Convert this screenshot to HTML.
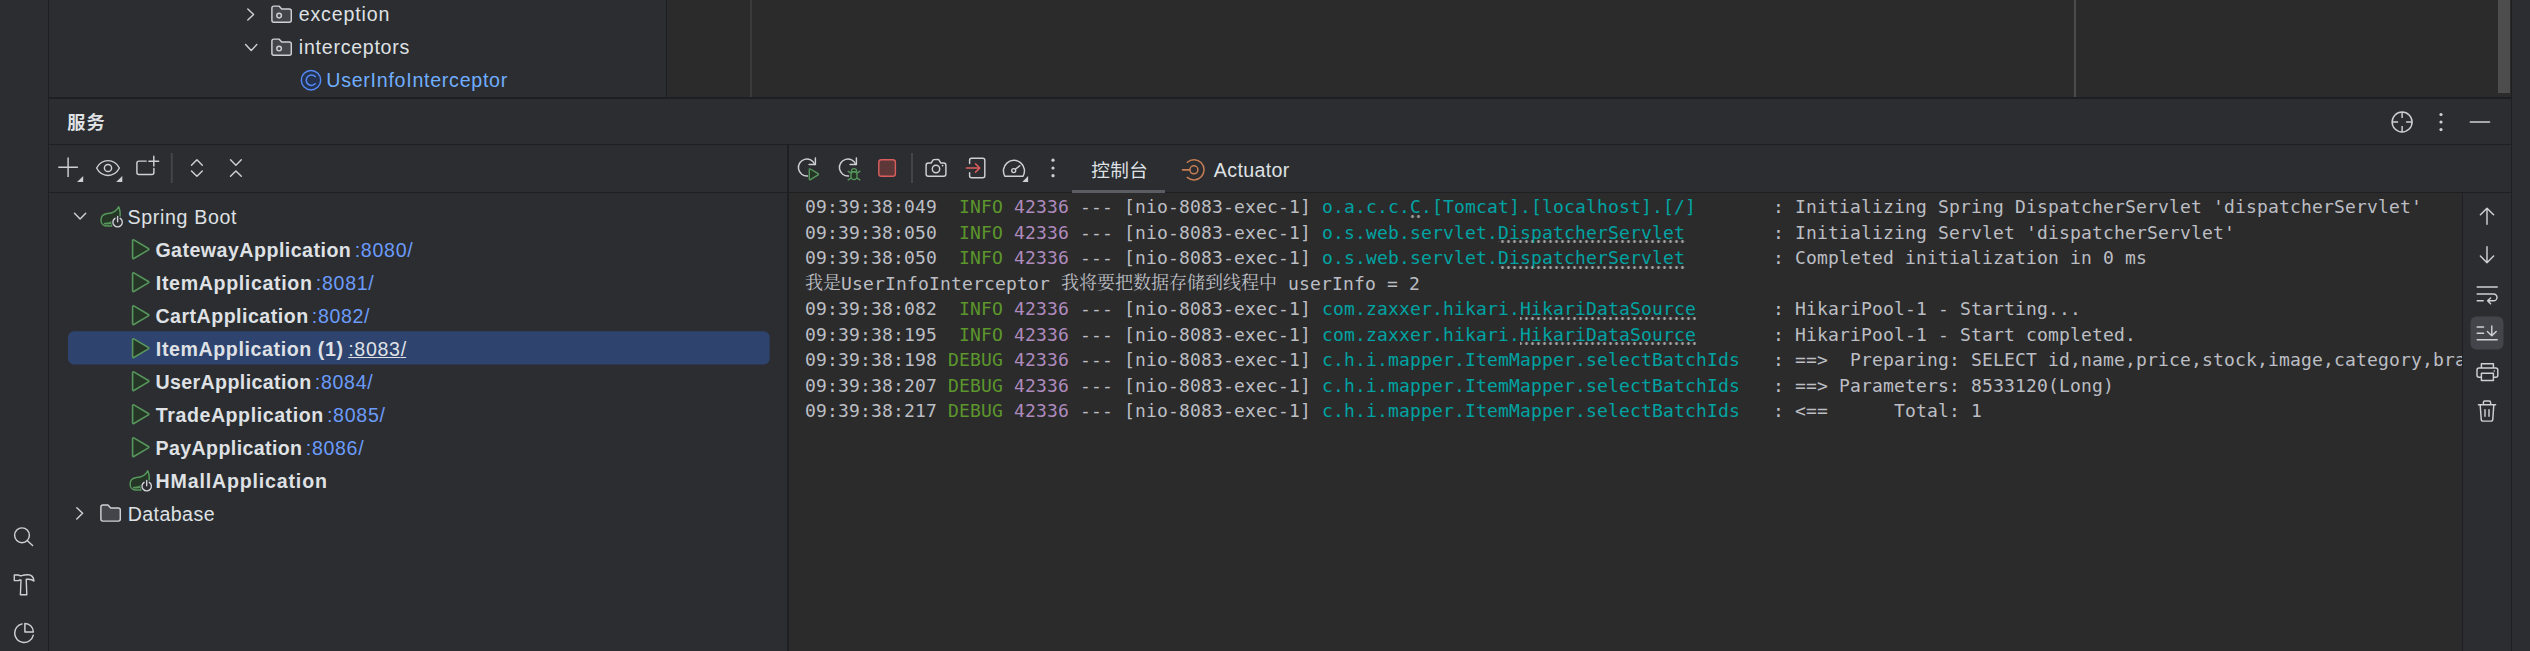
<!DOCTYPE html>
<html lang="zh">
<head>
<meta charset="utf-8">
<title>Services</title>
<style>
*{box-sizing:border-box;margin:0;padding:0}
html,body{width:2530px;height:651px;overflow:hidden;background:#2b2d30}
body{position:relative;font-family:"Liberation Sans","Noto Sans CJK SC",sans-serif;color:#dfe1e5;font-size:18px}
.abs{position:absolute}
.ln{position:absolute;background:#1e1f22}
.t{position:absolute;white-space:pre;line-height:33px;height:33px;font-size:18.6px;color:#dfe1e5}
.b{font-weight:bold}
.port{color:#6b9bfa;font-weight:normal}
svg{position:absolute;overflow:visible}
.con{position:absolute;left:805px;white-space:pre;font-family:"DejaVu Sans Mono","Liberation Mono","Noto Serif CJK SC",monospace;font-size:18px;letter-spacing:0.163px;line-height:26px;height:26px;color:#bcbec4}
.cj{font-family:"Noto Serif CJK SC","Liberation Mono",serif;font-size:18px;letter-spacing:0;line-height:0;position:relative;top:-1px}
.g{color:#5c962c}.m{color:#ae8abe}.c{color:#00a3a3}
.u{background-image:radial-gradient(circle at 3px 1.5px,#a0a0a0 1.15px,rgba(160,160,160,0) 1.75px);background-size:6px 3px;background-repeat:repeat-x;background-position:0 100%;padding-bottom:0.5px}
.u1{background-position-x:-0.5px}.u2{background-position-x:1.5px}.u3{background-position-x:3.5px}
</style>
</head>
<body>
<!-- editor area -->
<div class="abs" style="left:667px;top:0;width:1844px;height:97px;background:#2b2b2b"></div>
<div class="abs" style="left:750px;top:0;width:2px;height:97px;background:#3b3b3b"></div>
<div class="abs" style="left:2074px;top:0;width:2px;height:97px;background:#4b4b4b"></div>
<div class="abs" style="left:2498px;top:0;width:12px;height:93px;background:#4d4d4d"></div>
<!-- console bg -->
<div class="abs" style="left:789px;top:193px;width:1673px;height:458px;background:#2b2b2b"></div>
<!-- structural lines -->
<div class="ln" style="left:48px;top:0;width:1px;height:651px"></div>
<div class="ln" style="left:666px;top:0;width:1px;height:97px"></div>
<div class="ln" style="left:2511px;top:0;width:1px;height:651px"></div>
<div class="ln" style="left:49px;top:97px;width:2462px;height:2px"></div>
<div class="ln" style="left:49px;top:144px;width:2462px;height:1px"></div>
<div class="ln" style="left:49px;top:192px;width:2462px;height:1px"></div>
<div class="ln" style="left:787px;top:145px;width:2px;height:506px"></div>
<div class="ln" style="left:2462px;top:193px;width:1px;height:458px"></div>

<svg width="720" height="40" viewBox="60 328 720 40" style="left:60px;top:328px"><rect x="68" y="331.3" width="701.7" height="33.1" rx="6" fill="#2e436e"/></svg>
<div class="abs" style="left:1072px;top:190px;width:93px;height:3px;background:#5a5d63"></div>
<!--TEXT-START-->
<div class="t" id="p1" style="left:298.76px;top:-2px;font-size:19.6px;letter-spacing:0.837px">exception</div>
<div class="t" id="p2" style="left:298.86px;top:31px;font-size:19.6px;letter-spacing:0.733px">interceptors</div>
<div class="t" id="p3" style="left:326.24px;top:64px;font-size:19.6px;letter-spacing:0.741px;color:#70aeff">UserInfoInterceptor</div>
<div class="t b" id="h1" style="left:67.35px;top:107px;font-size:18.2px;letter-spacing:1.062px">服务</div>
<div class="t" id="s0" style="left:127.48px;top:201px;font-size:19.6px;letter-spacing:0.657px">Spring Boot</div>
<div class="t b" id="s1" style="left:155.38px;top:234px;font-size:19.6px;letter-spacing:0.482px">GatewayApplication</div>
<div class="t" id="s1p" style="left:354.69px;top:234px;font-size:19.6px;letter-spacing:0.721px;color:#6b9bfa">:8080/</div>
<div class="t b" id="s2" style="left:155.85px;top:267px;font-size:19.6px;letter-spacing:0.646px">ItemApplication</div>
<div class="t" id="s2p" style="left:315.86px;top:267px;font-size:19.6px;letter-spacing:0.689px;color:#6b9bfa">:8081/</div>
<div class="t b" id="s3" style="left:155.38px;top:300px;font-size:19.6px;letter-spacing:0.491px">CartApplication</div>
<div class="t" id="s3p" style="left:311.86px;top:300px;font-size:19.6px;letter-spacing:0.629px;color:#6b9bfa">:8082/</div>
<div class="t b" id="s4" style="left:155.85px;top:333px;font-size:19.6px;letter-spacing:0.600px">ItemApplication (1)</div>
<div class="t" id="s4p" style="left:348.19px;top:333px;font-size:19.6px;letter-spacing:0.698px;text-decoration:underline;text-decoration-thickness:1.2px;text-underline-offset:1px">:8083<span style="letter-spacing:0">/</span></div>
<div class="t b" id="s5" style="left:155.45px;top:366px;font-size:19.6px;letter-spacing:0.393px">UserApplication</div>
<div class="t" id="s5p" style="left:314.79px;top:366px;font-size:19.6px;letter-spacing:0.678px;color:#6b9bfa">:8084/</div>
<div class="t b" id="s6" style="left:155.80px;top:399px;font-size:19.6px;letter-spacing:0.562px">TradeApplication</div>
<div class="t" id="s6p" style="left:326.91px;top:399px;font-size:19.6px;letter-spacing:0.729px;color:#6b9bfa">:8085/</div>
<div class="t b" id="s7" style="left:155.56px;top:432px;font-size:19.6px;letter-spacing:0.385px">PayApplication</div>
<div class="t" id="s7p" style="left:305.87px;top:432px;font-size:19.6px;letter-spacing:0.656px;color:#6b9bfa">:8086/</div>
<div class="t b" id="s8" style="left:155.57px;top:465px;font-size:19.6px;letter-spacing:0.827px">HMallApplication</div>
<div class="t" id="s9" style="left:127.63px;top:498px;font-size:19.6px;letter-spacing:0.432px">Database</div>
<div class="t" id="t1" style="left:1091.22px;top:154px;font-size:18.6px;letter-spacing:0.403px">控制台</div>
<div class="t" id="t2" style="left:1213.85px;top:154px;font-size:19.6px;letter-spacing:0.339px">Actuator</div>
<!--TEXT-END-->

<!-- console -->
<div id="console">
<div class="con" style="top:194px">09:39:38:049  <span class="g">INFO</span> <span class="m">42336</span> --- [nio-8083-exec-1] <span class="c">o.a.c.c.<span class="u u1">C</span>.[Tomcat].[localhost].[/]</span>       : Initializing Spring DispatcherServlet 'dispatcherServlet'</div>
<div class="con" style="top:219.5px">09:39:38:050  <span class="g">INFO</span> <span class="m">42336</span> --- [nio-8083-exec-1] <span class="c">o.s.web.servlet.<span class="u u2">DispatcherServlet</span></span>        : Initializing Servlet 'dispatcherServlet'</div>
<div class="con" style="top:245px">09:39:38:050  <span class="g">INFO</span> <span class="m">42336</span> --- [nio-8083-exec-1] <span class="c">o.s.web.servlet.<span class="u u2">DispatcherServlet</span></span>        : Completed initialization in 0 ms</div>
<div class="con" style="top:270.5px"><span class="cj">我是</span>UserInfoInterceptor <span class="cj">我将要把数据存储到线程中</span> userInfo = 2</div>
<div class="con" style="top:296px">09:39:38:082  <span class="g">INFO</span> <span class="m">42336</span> --- [nio-8083-exec-1] <span class="c">com.zaxxer.hikari.<span class="u u3">HikariDataSource</span></span>       : HikariPool-1 - Starting...</div>
<div class="con" style="top:321.5px">09:39:38:195  <span class="g">INFO</span> <span class="m">42336</span> --- [nio-8083-exec-1] <span class="c">com.zaxxer.hikari.<span class="u u3">HikariDataSource</span></span>       : HikariPool-1 - Start completed.</div>
<div class="con" style="top:347px">09:39:38:198 <span class="g">DEBUG</span> <span class="m">42336</span> --- [nio-8083-exec-1] <span class="c">c.h.i.mapper.ItemMapper.selectBatchIds</span>   : ==&gt;  Preparing: SELECT id,name,price,stock,image,category,brand</div>
<div class="con" style="top:372.5px">09:39:38:207 <span class="g">DEBUG</span> <span class="m">42336</span> --- [nio-8083-exec-1] <span class="c">c.h.i.mapper.ItemMapper.selectBatchIds</span>   : ==&gt; Parameters: 8533120(Long)</div>
<div class="con" style="top:398px">09:39:38:217 <span class="g">DEBUG</span> <span class="m">42336</span> --- [nio-8083-exec-1] <span class="c">c.h.i.mapper.ItemMapper.selectBatchIds</span>   : &lt;==      Total: 1</div>
</div>
<!-- right console toolbar cover (clips overflowing console text) -->
<div class="abs" style="left:2462px;top:193px;width:49px;height:458px;background:#2b2d30;border-left:1px solid #1e1f22"></div>
<div class="abs" style="left:2511px;top:0;width:19px;height:651px;background:#2b2d30;border-left:1px solid #1e1f22"></div>

<!--ICONS-START-->
<svg width="2530" height="651" viewBox="0 0 2530 651" style="left:0;top:0">
<path d="M247.8 8.9L253.6 14.5L247.8 20.1" stroke="#ced0d6" fill="none" stroke-width="1.45" stroke-linecap="round" stroke-linejoin="round"/>
<path d="M273.90000000000003 6.1000000000000005h5.1l2.7 2.9h7.6a2 2 0 0 1 2 2v9.2a2 2 0 0 1 -2 2h-15.4a2 2 0 0 1 -2 -2v-12.1a2 2 0 0 1 2 -2z" stroke="#ced0d6" fill="#43454a" stroke-width="1.45" stroke-linejoin="round"/>
<circle cx="279.1" cy="15.6" r="2.3" stroke="#ced0d6" fill="none" stroke-width="1.45"/>
<path d="M245.6 44.6L251.2 50.4L256.8 44.6" stroke="#ced0d6" fill="none" stroke-width="1.45" stroke-linecap="round" stroke-linejoin="round"/>
<path d="M273.90000000000003 39.1h5.1l2.7 2.9h7.6a2 2 0 0 1 2 2v9.2a2 2 0 0 1 -2 2h-15.4a2 2 0 0 1 -2 -2v-12.1a2 2 0 0 1 2 -2z" stroke="#ced0d6" fill="#43454a" stroke-width="1.45" stroke-linejoin="round"/>
<circle cx="279.1" cy="48.599999999999994" r="2.3" stroke="#ced0d6" fill="none" stroke-width="1.45"/>
<circle cx="311" cy="80.2" r="9.7" stroke="#548af7" fill="#25324d" stroke-width="1.45"/>
<path d="M315.2 76.6a5.2 5.2 0 1 0 0 7.2" stroke="#548af7" fill="none" stroke-width="1.5" stroke-linecap="round"/>
<path d="M58.3 167.2H77.9M68.1 157.4V177" stroke="#ced0d6" fill="none" stroke-width="1.45"/>
<path d="M83.2 176.1V182H77.1z" fill="#ced0d6"/>
<path d="M96.6 168c2.6-4.9 6.6-7.4 11.4-7.4s8.800000000000001 2.5 11.4 7.4c-2.6 4.9-6.6 7.4-11.4 7.4s-8.800000000000001-2.5-11.4-7.4z" stroke="#ced0d6" fill="none" stroke-width="1.45" stroke-linejoin="round"/>
<circle cx="108" cy="168" r="3.6" stroke="#ced0d6" fill="none" stroke-width="1.45"/>
<path d="M122.3 176.1V182H116.2z" fill="#ced0d6"/>
<path d="M146.2 161.1h-7.3a2 2 0 0 0 -2 2v9.4a2 2 0 0 0 2 2h13a2 2 0 0 0 2 -2v-4.1" stroke="#ced0d6" fill="none" stroke-width="1.45" stroke-linecap="round"/>
<path d="M148.9 161.2h9.8M153.8 156.3v9.8" stroke="#ced0d6" fill="none" stroke-width="1.45" stroke-linecap="round"/>
<rect x="170.8" y="153" width="2" height="30" fill="#43454a"/>
<path d="M191.5 165.2L196.9 159.8L202.3 165.2M191.5 170.9L196.9 176.3L202.3 170.9" stroke="#ced0d6" fill="none" stroke-width="1.45" stroke-linecap="round" stroke-linejoin="round"/>
<path d="M230.5 159.8L235.9 165.2L241.3 159.8M230.5 176.3L235.9 170.9L241.3 176.3" stroke="#ced0d6" fill="none" stroke-width="1.45" stroke-linecap="round" stroke-linejoin="round"/>
<path d="M74.5 213.2L80.1 219.0L85.69999999999999 213.2" stroke="#ced0d6" fill="none" stroke-width="1.45" stroke-linecap="round" stroke-linejoin="round"/>
<path d="M118.7 206.8c-2.2 4.4-6.4 6.3-11.2 6.8c-4.2 0.5-6.5 3-6.5 6.6c0 3.4 2.6 5.9 6.300000000000001 5.9h4.6c-0.3-1.1-0.2-2.4 0.2-3.5c-2.7 1.2-5.2 1.5-7.6 0.9c3.2 0.2 6.1-0.6 8.6-2.400000000000001c1.4-2 3.9-2.9 6.300000000000001-2.2c1.2-4 0.9-8.1-0.7-12.1z" stroke="#57965c" fill="#253627" stroke-width="1.5" stroke-linejoin="round"/>
<circle cx="117.60000000000001" cy="222.2" r="6.3" fill="#2b2d30"/>
<path d="M115.00000000000001 218.29999999999998a4.7 4.7 0 1 0 5.2 0M117.60000000000001 216.39999999999998v5.4" stroke="#ced0d6" fill="none" stroke-width="1.4" stroke-linecap="round"/>
<path d="M132.6 240.6a0.8 0.8 0 0 1 1.2 -0.7l14.6 8.6a0.8 0.8 0 0 1 0 1.4l-14.6 8.6a0.8 0.8 0 0 1 -1.2 -0.7z" stroke="#57965c" fill="#253627" stroke-width="1.6" stroke-linejoin="round"/>
<path d="M132.6 273.59999999999997a0.8 0.8 0 0 1 1.2 -0.7l14.6 8.6a0.8 0.8 0 0 1 0 1.4l-14.6 8.6a0.8 0.8 0 0 1 -1.2 -0.7z" stroke="#57965c" fill="#253627" stroke-width="1.6" stroke-linejoin="round"/>
<path d="M132.6 306.59999999999997a0.8 0.8 0 0 1 1.2 -0.7l14.6 8.6a0.8 0.8 0 0 1 0 1.4l-14.6 8.6a0.8 0.8 0 0 1 -1.2 -0.7z" stroke="#57965c" fill="#253627" stroke-width="1.6" stroke-linejoin="round"/>
<path d="M132.6 339.59999999999997a0.8 0.8 0 0 1 1.2 -0.7l14.6 8.6a0.8 0.8 0 0 1 0 1.4l-14.6 8.6a0.8 0.8 0 0 1 -1.2 -0.7z" stroke="#57965c" fill="#253627" stroke-width="1.6" stroke-linejoin="round"/>
<path d="M132.6 372.59999999999997a0.8 0.8 0 0 1 1.2 -0.7l14.6 8.6a0.8 0.8 0 0 1 0 1.4l-14.6 8.6a0.8 0.8 0 0 1 -1.2 -0.7z" stroke="#57965c" fill="#253627" stroke-width="1.6" stroke-linejoin="round"/>
<path d="M132.6 405.59999999999997a0.8 0.8 0 0 1 1.2 -0.7l14.6 8.6a0.8 0.8 0 0 1 0 1.4l-14.6 8.6a0.8 0.8 0 0 1 -1.2 -0.7z" stroke="#57965c" fill="#253627" stroke-width="1.6" stroke-linejoin="round"/>
<path d="M132.6 438.59999999999997a0.8 0.8 0 0 1 1.2 -0.7l14.6 8.6a0.8 0.8 0 0 1 0 1.4l-14.6 8.6a0.8 0.8 0 0 1 -1.2 -0.7z" stroke="#57965c" fill="#253627" stroke-width="1.6" stroke-linejoin="round"/>
<path d="M147.8 470.8c-2.2 4.4-6.4 6.3-11.2 6.8c-4.2 0.5-6.5 3-6.5 6.6c0 3.4 2.6 5.9 6.300000000000001 5.9h4.6c-0.3-1.1-0.2-2.4 0.2-3.5c-2.7 1.2-5.2 1.5-7.6 0.9c3.2 0.2 6.1-0.6 8.6-2.400000000000001c1.4-2 3.9-2.9 6.300000000000001-2.2c1.2-4 0.9-8.1-0.7-12.1z" stroke="#57965c" fill="#253627" stroke-width="1.5" stroke-linejoin="round"/>
<circle cx="146.7" cy="486.2" r="6.3" fill="#2b2d30"/>
<path d="M144.1 482.3a4.7 4.7 0 1 0 5.2 0M146.7 480.4v5.4" stroke="#ced0d6" fill="none" stroke-width="1.4" stroke-linecap="round"/>
<path d="M76.8 507.69999999999993L82.6 513.3L76.8 518.9" stroke="#ced0d6" fill="none" stroke-width="1.45" stroke-linecap="round" stroke-linejoin="round"/>
<path d="M102.89999999999999 505.0h5.1l2.7 2.9h7.6a2 2 0 0 1 2 2v9.2a2 2 0 0 1 -2 2h-15.4a2 2 0 0 1 -2 -2v-12.1a2 2 0 0 1 2 -2z" stroke="#ced0d6" fill="#43454a" stroke-width="1.45" stroke-linejoin="round"/>
<circle cx="22" cy="535.3" r="7.4" stroke="#ced0d6" fill="none" stroke-width="1.45"/><path d="M27.4 540.7L32.6 545.5" stroke="#ced0d6" stroke-width="1.45" stroke-linecap="round"/>
<path d="M14.3 575H18.3L19.8 575.7H21.5C23.5 575 25.5 574.8 28 574.8C31.6 574.8 33.6 577.4 33.9 581C32.5 579.7 30.8 579.2 28.6 579.2H26.2L26.8 594.7H20.4L21 580H19.8L18.3 580.6H14.3z" stroke="#ced0d6" fill="none" stroke-width="1.4" stroke-linejoin="round" stroke-linecap="round"/>
<path d="M22.1 623.9A9.4 9.4 0 1 0 33.2 635.3" stroke="#ced0d6" fill="none" stroke-width="1.45" stroke-linecap="round"/>
<path d="M24.9 623.4V631.9H33.4A8.5 8.5 0 0 0 24.9 623.4z" stroke="#ced0d6" fill="none" stroke-width="1.45" stroke-linejoin="round"/>
<circle cx="2402.1" cy="122" r="10" stroke="#ced0d6" fill="none" stroke-width="1.45"/>
<path d="M2402.1 112v6M2402.1 126v6M2392.1 122h6M2406.1 122h6" stroke="#ced0d6" stroke-width="1.45"/>
<circle cx="2441" cy="114.5" r="1.6" fill="#ced0d6"/>
<circle cx="2441" cy="122" r="1.6" fill="#ced0d6"/>
<circle cx="2441" cy="129.6" r="1.6" fill="#ced0d6"/>
<path d="M2470.3 122H2489.6" stroke="#ced0d6" stroke-width="1.45" stroke-linecap="round"/>
<path d="M815.4 157.9V164.4H809.1" stroke="#ced0d6" fill="none" stroke-width="1.45" stroke-linecap="round" stroke-linejoin="round"/>
<path d="M814.8 164.4A8.5 8.5 0 1 0 807.5 176.0" stroke="#ced0d6" fill="none" stroke-width="1.45" stroke-linecap="round"/>
<path d="M809.3 169.6a0.7 0.7 0 0 1 1.1 -0.6l7.7 4.7a0.7 0.7 0 0 1 0 1.2l-7.7 4.7a0.7 0.7 0 0 1 -1.1 -0.6z" stroke="#57965c" fill="#253627" stroke-width="1.4" stroke-linejoin="round"/>
<path d="M856.4 157.9V164.4H850.1" stroke="#ced0d6" fill="none" stroke-width="1.45" stroke-linecap="round" stroke-linejoin="round"/>
<path d="M855.8 164.4A8.5 8.5 0 1 0 848.5 176.0" stroke="#ced0d6" fill="none" stroke-width="1.45" stroke-linecap="round"/>
<path d="M851 173.1L848.2 171.3M857 173.1L859.8 171.3M851 178.1L848.2 179.9M857 178.1L859.8 179.9" stroke="#57965c" stroke-width="1.4" stroke-linecap="round"/>
<path d="M851.3 171.6a2.7 2.9 0 0 1 5.4 0z" fill="#253627" stroke="#57965c" stroke-width="1.3" stroke-linejoin="round"/>
<ellipse cx="854" cy="175.7" rx="3.1" ry="3.9" fill="#253627" stroke="#57965c" stroke-width="1.4"/>
<rect x="878.8" y="159.7" width="16.6" height="16.6" rx="2.6" fill="#5e3838" stroke="#db5c5c" stroke-width="1.4"/>
<rect x="911" y="153" width="2" height="30" fill="#43454a"/>
<path d="M931.3 162.9l1.5-2.6a1.4 1.4 0 0 1 1.2 -0.7h4a1.4 1.4 0 0 1 1.2 0.7l1.5 2.6h2.9a2.3 2.3 0 0 1 2.3 2.3v8.7a2.3 2.3 0 0 1 -2.3 2.3h-15.2a2.3 2.3 0 0 1 -2.3 -2.3v-8.7a2.3 2.3 0 0 1 2.3 -2.3z" stroke="#ced0d6" fill="none" stroke-width="1.45" stroke-linejoin="round"/>
<circle cx="936" cy="169" r="3.7" stroke="#ced0d6" fill="none" stroke-width="1.45"/><circle cx="942.6" cy="165.6" r="0.9" fill="#ced0d6"/>
<path d="M969.6 163.4v-3.2a2 2 0 0 1 2 -2h11.2a2 2 0 0 1 2 2v15.6a2 2 0 0 1 -2 2h-11.2a2 2 0 0 1 -2 -2v-3.2" stroke="#ced0d6" fill="none" stroke-width="1.45" stroke-linecap="round"/>
<path d="M966.3 168h13.2M975.6 163.9L979.7 168L975.6 172.1" stroke="#db5c5c" fill="none" stroke-width="1.5" stroke-linecap="round" stroke-linejoin="round"/>
<path d="M1005 176.3H1022.9A10.5 10.5 0 1 0 1005 176.3z" stroke="#ced0d6" fill="none" stroke-width="1.45" stroke-linejoin="round"/>
<circle cx="1013.7" cy="170.6" r="2" stroke="#ced0d6" fill="none" stroke-width="1.4"/><path d="M1015.3 169.3L1019.8 165.7" stroke="#ced0d6" stroke-width="1.45" stroke-linecap="round"/>
<path d="M1028.1 176.1V181.9H1022.3z" fill="#ced0d6"/>
<circle cx="1053" cy="160.2" r="1.6" fill="#ced0d6"/>
<circle cx="1053" cy="168" r="1.6" fill="#ced0d6"/>
<circle cx="1053" cy="175.7" r="1.6" fill="#ced0d6"/>
<circle cx="1193.9" cy="169.8" r="4" stroke="#c77d55" fill="none" stroke-width="1.5"/>
<path d="M1182.6 169.8h7.2" stroke="#c77d55" stroke-width="1.7" stroke-linecap="round"/>
<path d="M1187.3 162.2a10.1 10.1 0 1 1 0 15.2" stroke="#c77d55" fill="none" stroke-width="1.5" stroke-linecap="round"/>
<path d="M2487 224.3V208.2M2480.4 214.8L2487 208.2L2493.6 214.8" stroke="#ced0d6" fill="none" stroke-width="1.45" stroke-linecap="round" stroke-linejoin="round"/>
<path d="M2487 246.6V262.7M2480.4 256.1L2487 262.7L2493.6 256.1" stroke="#ced0d6" fill="none" stroke-width="1.45" stroke-linecap="round" stroke-linejoin="round"/>
<path d="M2477.2 287H2497.2M2477.2 294H2493.6a3.4 3.4 0 0 1 0 6.8h-5.6M2477.2 300.8H2483.2M2490.6 297.9L2487.6 300.8L2490.6 303.7" stroke="#ced0d6" fill="none" stroke-width="1.45" stroke-linecap="round" stroke-linejoin="round"/>
<rect x="2470.5" y="316.5" width="33" height="33" rx="6" fill="#43454a"/>
<path d="M2477.2 327H2483.6M2477.2 333.3H2483.6M2477.2 339.7H2497.2M2491.8 326V335.6M2487.4 331.4L2491.8 335.8L2496.2 331.4" stroke="#ced0d6" fill="none" stroke-width="1.45" stroke-linecap="round" stroke-linejoin="round"/>
<path d="M2481.4 368v-4.2h12v4.2M2481.4 377.3h-2.4a2 2 0 0 1 -2 -2v-5.300000000000001a2 2 0 0 1 2 -2h16.8a2 2 0 0 1 2 2v5.300000000000001a2 2 0 0 1 -2 2h-2.4M2481.4 373.2h12v7.2h-12z" stroke="#ced0d6" fill="none" stroke-width="1.45" stroke-linejoin="round"/>
<circle cx="2494.3" cy="371" r="0.8" fill="#ced0d6"/>
<path d="M2478.4 404.8H2495.6M2483.4 404.6v-2.2a1.4 1.4 0 0 1 1.4 -1.4h4.4a1.4 1.4 0 0 1 1.4 1.4v2.2M2480.2 405l1 14.2a2 2 0 0 0 2 1.9h7.6a2 2 0 0 0 2 -1.9l1-14.2M2485 409.6v6.6M2489 409.6v6.6" stroke="#ced0d6" fill="none" stroke-width="1.45" stroke-linecap="round" stroke-linejoin="round"/>
</svg>
<!--ICONS-END-->
</body>
</html>
